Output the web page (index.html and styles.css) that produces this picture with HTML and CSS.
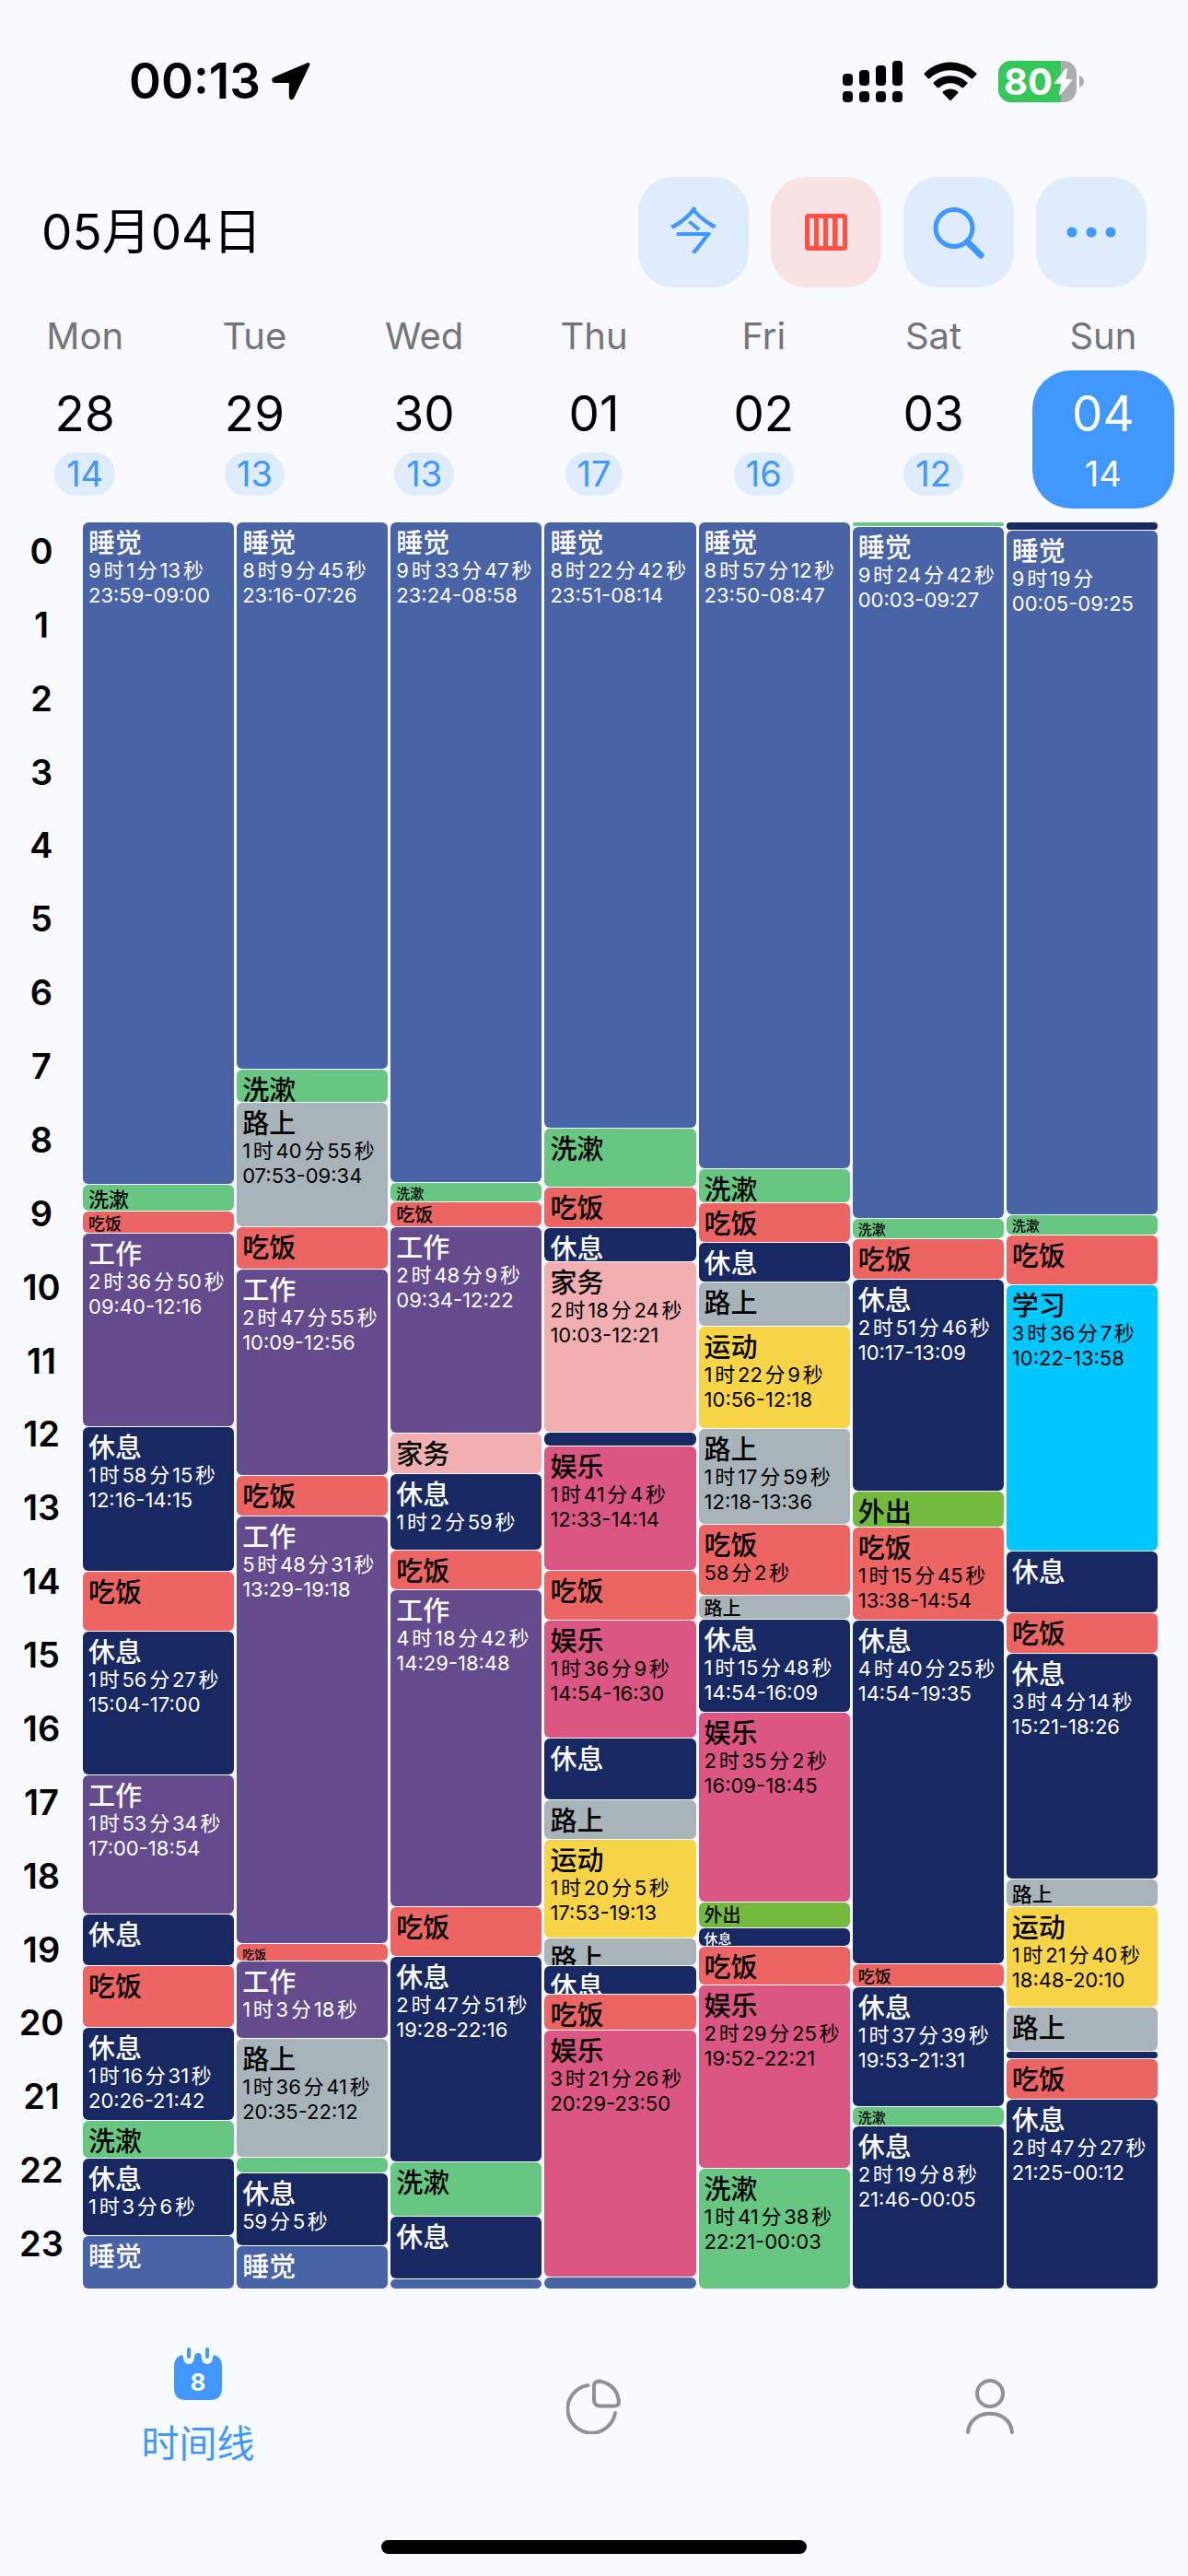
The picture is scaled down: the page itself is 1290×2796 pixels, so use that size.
FILE: index.html
```html
<!DOCTYPE html>
<html lang="zh-CN">
<head>
<meta charset="utf-8">
<meta name="viewport" content="width=device-width, initial-scale=1">
<title>时间线</title>
<link rel="stylesheet" href="styles.css">
</head>
<body>
<div class="status">
  <div class="status-left">
    <span class="clock">00:13</span>
    <svg width="42" height="42" viewBox="0 0 42 42" aria-hidden="true"><path d="M39.500 3 L22.500 38.500 Q21.500 40 20.800 38.500 V21 H3 Q1.500 20 3 18.500 Z" fill="#000" stroke="#000" stroke-width="4" stroke-linejoin="round"/></svg>
  </div>
  <div class="status-right">
    <svg width="65" height="45" viewBox="0 0 65 45" aria-hidden="true"><rect x="0" y="14" width="11" height="13" rx="4"/><rect x="18" y="10" width="11" height="17" rx="4"/><rect x="36" y="5" width="11" height="22" rx="4"/><rect x="54" y="0" width="11" height="27" rx="4"/><rect x="0" y="33" width="11" height="12" rx="4"/><rect x="18" y="33" width="11" height="12" rx="4"/><rect x="36" y="33" width="11" height="12" rx="4"/><rect x="54" y="33" width="11" height="12" rx="4"/></svg>
    <svg class="wifi" width="58" height="43" viewBox="0 0 58 43" aria-hidden="true"><path d="M29 0.500 A41 41 0 0 1 57 12.200 Q58 13.200 57 14.200 L53.300 18 Q52.300 18.800 51.300 18 A32.500 32.500 0 0 0 6.700 18 Q5.700 18.800 4.700 18 L1 14.200 Q0 13.200 1 12.200 A41 41 0 0 1 29 0.500Z"/><path d="M29 15.300 A26.500 26.500 0 0 1 47 22.300 Q48 23.300 47 24.300 L43.200 28 Q42.200 28.800 41.200 28 A18 18 0 0 0 16.800 28 Q15.800 28.800 14.800 28 L11 24.300 Q10 23.300 11 22.300 A26.500 26.500 0 0 1 29 15.300Z"/><path d="M29 29.500 A13 13 0 0 1 37 32.300 Q38 33.300 37 34.300 L30 41.600 Q29 42.600 28 41.600 L21 34.300 Q20 33.300 21 32.300 A13 13 0 0 1 29 29.500Z"/></svg>
    <svg width="93" height="45" viewBox="0 0 93 45" role="img" aria-label="80%"><defs><clipPath id="cell"><rect width="85" height="45" rx="14"/></clipPath></defs><g clip-path="url(#cell)"><rect width="85" height="45" fill="#adadaf"/><rect width="68" height="45" fill="#35c759"/></g><path d="M88 16 Q93 18 93 22.500 T88 29Z" fill="#adadaf"/><text class="charge" x="6" y="37">80</text><path d="M74 9 L62 24 H69.500 L67 36 L79 21 H72 Z" fill="#fff" stroke="#fff" stroke-width="2" stroke-linejoin="round"/></svg>
  </div>
</div>

<header class="top">
  <h1>05月04日</h1>
  <div class="actions">
    <button class="action" type="button">今</button>
    <button class="action red" type="button" aria-label="周视图"><svg width="46" height="40" viewBox="0 0 46 40"><path fill="#ff5144" fill-rule="evenodd" d="M4 0H42Q46 0 46 4V36Q46 40 42 40H4Q0 40 0 36V4Q0 0 4 0ZM5 5V35H10V5ZM15 5V35H20V5ZM25 5V35H30V5ZM35.500 5V35H41V5Z"/></svg></button>
    <button class="action" type="button" aria-label="搜索"><svg width="60" height="60" viewBox="0 0 60 60" fill="none" stroke="#3f97ff"><circle cx="25" cy="25.500" r="20" stroke-width="5"/><path d="M39.500 40.500 L54 55" stroke-width="7" stroke-linecap="round"/></svg></button>
    <button class="action" type="button" aria-label="更多"><svg width="54" height="12" viewBox="0 0 54 12" fill="#3f97ff"><circle cx="6" cy="6" r="5.500"/><circle cx="27" cy="6" r="5.500"/><circle cx="48" cy="6" r="5.500"/></svg></button>
  </div>
</header>

<section class="week">
  <div class="weekday"><span>Mon</span><button class="day" type="button"><span class="date">28</span><span class="count">14</span></button></div>
  <div class="weekday"><span>Tue</span><button class="day" type="button"><span class="date">29</span><span class="count">13</span></button></div>
  <div class="weekday"><span>Wed</span><button class="day" type="button"><span class="date">30</span><span class="count">13</span></button></div>
  <div class="weekday"><span>Thu</span><button class="day" type="button"><span class="date">01</span><span class="count">17</span></button></div>
  <div class="weekday"><span>Fri</span><button class="day" type="button"><span class="date">02</span><span class="count">16</span></button></div>
  <div class="weekday"><span>Sat</span><button class="day" type="button"><span class="date">03</span><span class="count">12</span></button></div>
  <div class="weekday"><span>Sun</span><button class="day selected" type="button"><span class="date">04</span><span class="count">14</span></button></div>
</section>

<main class="timeline">
  <div class="hours">
    <span>0</span><span>1</span><span>2</span><span>3</span><span>4</span><span>5</span><span>6</span><span>7</span><span>8</span><span>9</span><span>10</span><span>11</span><span>12</span><span>13</span><span>14</span><span>15</span><span>16</span><span>17</span><span>18</span><span>19</span><span>20</span><span>21</span><span>22</span><span>23</span>
  </div>
  <div class="days">
    <ul class="track">
      <li class="sleep" style="--h:719"><b>睡觉</b><span>9时1分13秒</span><span>23:59-09:00</span></li>
      <li class="wash mini m22" style="--h:29"><b>洗漱</b></li>
      <li class="eat mini m18" style="--h:24"><b>吃饭</b></li>
      <li class="work" style="--h:209"><b>工作</b><span>2时36分50秒</span><span>09:40-12:16</span></li>
      <li class="rest" style="--h:157"><b>休息</b><span>1时58分15秒</span><span>12:16-14:15</span></li>
      <li class="eat" style="--h:65"><b>吃饭</b></li>
      <li class="rest" style="--h:156"><b>休息</b><span>1时56分27秒</span><span>15:04-17:00</span></li>
      <li class="work" style="--h:151"><b>工作</b><span>1时53分34秒</span><span>17:00-18:54</span></li>
      <li class="rest" style="--h:56"><b>休息</b></li>
      <li class="eat" style="--h:67"><b>吃饭</b></li>
      <li class="rest" style="--h:101"><b>休息</b><span>1时16分31秒</span><span>20:26-21:42</span></li>
      <li class="wash" style="--h:41"><b>洗漱</b></li>
      <li class="rest" style="--h:84"><b>休息</b><span>1时3分6秒</span></li>
      <li class="sleep" style="--h:58"><b>睡觉</b></li>
    </ul>
    <ul class="track">
      <li class="sleep" style="--h:594"><b>睡觉</b><span>8时9分45秒</span><span>23:16-07:26</span></li>
      <li class="wash" style="--h:36"><b>洗漱</b></li>
      <li class="road" style="--h:135"><b>路上</b><span>1时40分55秒</span><span>07:53-09:34</span></li>
      <li class="eat" style="--h:46"><b>吃饭</b></li>
      <li class="work" style="--h:223"><b>工作</b><span>2时47分55秒</span><span>10:09-12:56</span></li>
      <li class="eat" style="--h:44"><b>吃饭</b></li>
      <li class="work" style="--h:464"><b>工作</b><span>5时48分31秒</span><span>13:29-19:18</span></li>
      <li class="eat mini m13" style="--h:19"><b>吃饭</b></li>
      <li class="work" style="--h:84"><b>工作</b><span>1时3分18秒</span></li>
      <li class="road" style="--h:129"><b>路上</b><span>1时36分41秒</span><span>20:35-22:12</span></li>
      <li class="wash" style="--h:17"></li>
      <li class="rest" style="--h:79"><b>休息</b><span>59分5秒</span></li>
      <li class="sleep" style="--h:47"><b>睡觉</b></li>
    </ul>
    <ul class="track">
      <li class="sleep" style="--h:717"><b>睡觉</b><span>9时33分47秒</span><span>23:24-08:58</span></li>
      <li class="wash mini m15" style="--h:21"><b>洗漱</b></li>
      <li class="eat mini m20" style="--h:27"><b>吃饭</b></li>
      <li class="work" style="--h:223"><b>工作</b><span>2时48分9秒</span><span>09:34-12:22</span></li>
      <li class="home" style="--h:44"><b>家务</b></li>
      <li class="rest" style="--h:83"><b>休息</b><span>1时2分59秒</span></li>
      <li class="eat" style="--h:43"><b>吃饭</b></li>
      <li class="work" style="--h:344"><b>工作</b><span>4时18分42秒</span><span>14:29-18:48</span></li>
      <li class="eat" style="--h:54"><b>吃饭</b></li>
      <li class="rest" style="--h:223"><b>休息</b><span>2时47分51秒</span><span>19:28-22:16</span></li>
      <li class="wash" style="--h:59"><b>洗漱</b></li>
      <li class="rest" style="--h:68"><b>休息</b></li>
      <li class="sleep" style="--h:11"></li>
    </ul>
    <ul class="track">
      <li class="sleep" style="--h:658"><b>睡觉</b><span>8时22分42秒</span><span>23:51-08:14</span></li>
      <li class="wash" style="--h:64"><b>洗漱</b></li>
      <li class="eat" style="--h:44"><b>吃饭</b></li>
      <li class="rest" style="--h:37"><b>休息</b></li>
      <li class="home" style="--h:184"><b>家务</b><span>2时18分24秒</span><span>10:03-12:21</span></li>
      <li class="rest" style="--h:15"></li>
      <li class="play" style="--h:135"><b>娱乐</b><span>1时41分4秒</span><span>12:33-14:14</span></li>
      <li class="eat" style="--h:54"><b>吃饭</b></li>
      <li class="play" style="--h:128"><b>娱乐</b><span>1时36分9秒</span><span>14:54-16:30</span></li>
      <li class="rest" style="--h:67"><b>休息</b></li>
      <li class="road" style="--h:43"><b>路上</b></li>
      <li class="sport" style="--h:107"><b>运动</b><span>1时20分5秒</span><span>17:53-19:13</span></li>
      <li class="road" style="--h:30"><b>路上</b></li>
      <li class="rest" style="--h:31"><b>休息</b></li>
      <li class="eat" style="--h:39"><b>吃饭</b></li>
      <li class="play" style="--h:268"><b>娱乐</b><span>3时21分26秒</span><span>20:29-23:50</span></li>
      <li class="sleep" style="--h:13"></li>
    </ul>
    <ul class="track">
      <li class="sleep" style="--h:702"><b>睡觉</b><span>8时57分12秒</span><span>23:50-08:47</span></li>
      <li class="wash" style="--h:37"><b>洗漱</b></li>
      <li class="eat" style="--h:43"><b>吃饭</b></li>
      <li class="rest" style="--h:43"><b>休息</b></li>
      <li class="road" style="--h:48"><b>路上</b></li>
      <li class="sport" style="--h:110"><b>运动</b><span>1时22分9秒</span><span>10:56-12:18</span></li>
      <li class="road" style="--h:104"><b>路上</b><span>1时17分59秒</span><span>12:18-13:36</span></li>
      <li class="eat" style="--h:77"><b>吃饭</b><span>58分2秒</span></li>
      <li class="road mini m20" style="--h:26"><b>路上</b></li>
      <li class="rest" style="--h:101"><b>休息</b><span>1时15分48秒</span><span>14:54-16:09</span></li>
      <li class="play" style="--h:206"><b>娱乐</b><span>2时35分2秒</span><span>16:09-18:45</span></li>
      <li class="out mini m20" style="--h:28"><b>外出</b></li>
      <li class="rest mini m15" style="--h:20"><b>休息</b></li>
      <li class="eat" style="--h:42"><b>吃饭</b></li>
      <li class="play" style="--h:199"><b>娱乐</b><span>2时29分25秒</span><span>19:52-22:21</span></li>
      <li class="wash" style="--h:131"><b>洗漱</b><span>1时41分38秒</span><span>22:21-00:03</span></li>
    </ul>
    <ul class="track">
      <li class="wash" style="--h:5"></li>
      <li class="sleep" style="--h:751"><b>睡觉</b><span>9时24分42秒</span><span>00:03-09:27</span></li>
      <li class="wash mini m15" style="--h:22"><b>洗漱</b></li>
      <li class="eat" style="--h:44"><b>吃饭</b></li>
      <li class="rest" style="--h:229"><b>休息</b><span>2时51分46秒</span><span>10:17-13:09</span></li>
      <li class="out" style="--h:39"><b>外出</b></li>
      <li class="eat" style="--h:101"><b>吃饭</b><span>1时15分45秒</span><span>13:38-14:54</span></li>
      <li class="rest" style="--h:373"><b>休息</b><span>4时40分25秒</span><span>14:54-19:35</span></li>
      <li class="eat mini m18" style="--h:25"><b>吃饭</b></li>
      <li class="rest" style="--h:130"><b>休息</b><span>1时37分39秒</span><span>19:53-21:31</span></li>
      <li class="wash mini m15" style="--h:21"><b>洗漱</b></li>
      <li class="rest" style="--h:177"><b>休息</b><span>2时19分8秒</span><span>21:46-00:05</span></li>
    </ul>
    <ul class="track">
      <li class="rest" style="--h:9"></li>
      <li class="sleep" style="--h:743"><b>睡觉</b><span>9时19分</span><span>00:05-09:25</span></li>
      <li class="wash mini m15" style="--h:22"><b>洗漱</b></li>
      <li class="eat" style="--h:54"><b>吃饭</b></li>
      <li class="study" style="--h:288"><b>学习</b><span>3时36分7秒</span><span>10:22-13:58</span></li>
      <li class="rest" style="--h:67"><b>休息</b></li>
      <li class="eat" style="--h:44"><b>吃饭</b></li>
      <li class="rest" style="--h:245"><b>休息</b><span>3时4分14秒</span><span>15:21-18:26</span></li>
      <li class="road mini m22" style="--h:30"><b>路上</b></li>
      <li class="sport" style="--h:109"><b>运动</b><span>1时21分40秒</span><span>18:48-20:10</span></li>
      <li class="road" style="--h:48"><b>路上</b></li>
      <li class="rest" style="--h:8"></li>
      <li class="eat" style="--h:44"><b>吃饭</b></li>
      <li class="rest" style="--h:206"><b>休息</b><span>2时47分27秒</span><span>21:25-00:12</span></li>
    </ul>
  </div>
</main>

<footer class="bottom">
  <nav class="tabs">
    <a class="tab" href="#timeline"><svg width="54" height="60" viewBox="0 0 54 60" aria-hidden="true"><path d="M8 9.500 Q11 8.500 11 12 Q11.500 19 17 19 Q22.500 19 23 12 Q23 7 27 7 Q31 7 31 12 Q31.500 19 37 19 Q42.500 19 43 12 Q43 8.500 46 9.500 Q53 13 53 21 V45 Q53 58 40 58 H14 Q1 58 1 45 V21 Q1 13 8 9.500Z" fill="#3f97ff"/><path d="M17 3V11M37 3V11" stroke="#3f97ff" stroke-width="4" stroke-linecap="round"/><text class="cal-num" x="27" y="48" text-anchor="middle">8</text></svg><span>时间线</span></a>
    <a class="tab" href="#stats" aria-label="统计"><svg width="60" height="60" viewBox="0 0 60 60" fill="none" stroke="#909095" stroke-width="4" stroke-linecap="round" stroke-linejoin="round" aria-hidden="true"><path d="M23.500 7 A26 26 0 1 0 53 37"/><path d="M30 8 Q30 2.500 36 2.500 Q55 6 57 25 Q57 29.500 52 29.500 H37 Q30 29.500 30 22.500Z"/></svg></a>
    <a class="tab" href="#me" aria-label="我的"><svg width="60" height="60" viewBox="0 0 60 60" fill="none" stroke="#909095" stroke-width="4" stroke-linecap="round" aria-hidden="true"><circle cx="30" cy="16" r="14"/><path d="M6 58 C8 31 52 31 54 58"/></svg></a>
  </nav>
  <div class="home-bar"></div>
</footer>
</body>
</html>
```
FILE: styles.css
```css
* { box-sizing: border-box; }

body {
  margin: 0;
  min-height: 100vh;
  display: flex;
  flex-direction: column;
  background: #f8faff;
  color: #000;
  font-family: Inter, "Noto Sans CJK SC", sans-serif;
}

button { border: 0; padding: 0; background: none; font: inherit; color: inherit; }

/* status bar */
.status {
  height: 176px;
  padding: 0 113px 0 140px;
  display: flex;
  align-items: center;
  justify-content: space-between;
}
.status-left, .status-right { display: flex; align-items: center; }
.status-left { gap: 12px; }
.status-right { gap: 23px; }
.clock { font-size: 53px; font-weight: 600; line-height: 64px; }
.charge { font-size: 40px; font-weight: 700; fill: #fff; }

/* title row */
.top {
  padding: 16px 45px 0;
  display: flex;
  align-items: center;
  justify-content: space-between;
}
h1 { margin: 0; font-size: 53px; font-weight: 400; line-height: 64px; }
.actions { display: flex; gap: 24px; }
.action {
  width: 120px;
  height: 120px;
  display: flex;
  align-items: center;
  justify-content: center;
  border-radius: 38px;
  background: #deecfc;
  color: #3f97ff;
  font-size: 54px;
  line-height: 64px;
}
.action.red { background: #f9e2e4; }

/* week strip */
.week {
  margin-top: 30px;
  display: grid;
  grid-template-columns: repeat(7, 1fr);
}
.weekday {
  display: flex;
  flex-direction: column;
  align-items: center;
  gap: 14px;
  color: #757578;
  font-size: 40px;
  line-height: 46px;
}
.day {
  width: 154px;
  height: 150px;
  padding-top: 15px;
  display: flex;
  flex-direction: column;
  align-items: center;
  gap: 10px;
  border-radius: 42px;
  color: #000;
}
.date { font-size: 53px; line-height: 64px; }
.count {
  padding: 0 13px;
  border-radius: 24px;
  background: #deecfc;
  color: #3f97ff;
  font-size: 38px;
  line-height: 47px;
}
.selected { background: #3f97ff; color: #fff; }
.selected .count { background: none; color: #fff; }

/* timeline */
.timeline {
  flex: 1;
  min-height: 1680px;
  margin: 15px 33px 45px 0;
  display: flex;
}
.hours {
  width: 90px;
  display: flex;
  flex-direction: column;
}
.hours span {
  flex: 1;
  padding-bottom: 18px;
  display: flex;
  align-items: center;
  justify-content: center;
  font-size: 38px;
  font-weight: 600;
  line-height: 46px;
}
.days {
  flex: 1;
  display: grid;
  grid-template-columns: repeat(7, 1fr);
  gap: 3px;
}
.track {
  margin: 0;
  padding: 0;
  min-width: 0;
  list-style: none;
  display: flex;
  flex-direction: column;
  gap: 1px;
}
.track li {
  flex: calc(var(--h) - 1) 1 0;
  min-height: 0;
  overflow: hidden;
  border-radius: 6px;
  white-space: nowrap;
}
.track b, .track span { display: block; margin-left: 6px; }
.track b { margin-top: 6px; font-size: 29px; font-weight: 500; line-height: 33px; }
.track span { font-size: 22px; line-height: 27px; text-autospace: normal; }

/* short entries shrink their label to the height they have */
.track .mini b { margin-top: 4px; }
.track .m22 b { font-size: 22px; line-height: 24px; }
.track .m20 b { font-size: 20px; line-height: 21px; }
.track .m18 b { font-size: 18px; line-height: 19px; }
.track .m15 b { font-size: 15px; line-height: 15px; }
.track .m13 b { font-size: 13px; line-height: 14px; }

.sleep { background: #4863a6; color: #fff; }
.work { background: #634b8e; color: #fff; }
.rest { background: #182863; color: #fff; }
.wash { background: #66c682; }
.eat { background: #ec6562; }
.road { background: #a9b4ba; }
.sport { background: #f8d547; }
.play { background: #dc5683; }
.home { background: #f1afb1; }
.out { background: #73ba3f; }
.study { background: #00c8ff; }

/* tab bar */
.bottom {
  padding-bottom: 24px;
  display: flex;
  flex-direction: column;
  align-items: center;
  gap: 51px;
  background: #f7fbfe;
}
.tabs {
  align-self: stretch;
  height: 177px;
  padding-top: 18px;
  display: grid;
  grid-template-columns: repeat(3, 1fr);
}
.tab {
  height: 130px;
  display: flex;
  flex-direction: column;
  align-items: center;
  justify-content: center;
  gap: 20px;
  color: #3f97ff;
  font-size: 41px;
  line-height: 50px;
  text-decoration: none;
}
.cal-num { font-size: 26px; font-weight: 700; fill: #fff; }
.home-bar {
  width: 462px;
  height: 15px;
  border-radius: 8px;
  background: #000;
}
```
